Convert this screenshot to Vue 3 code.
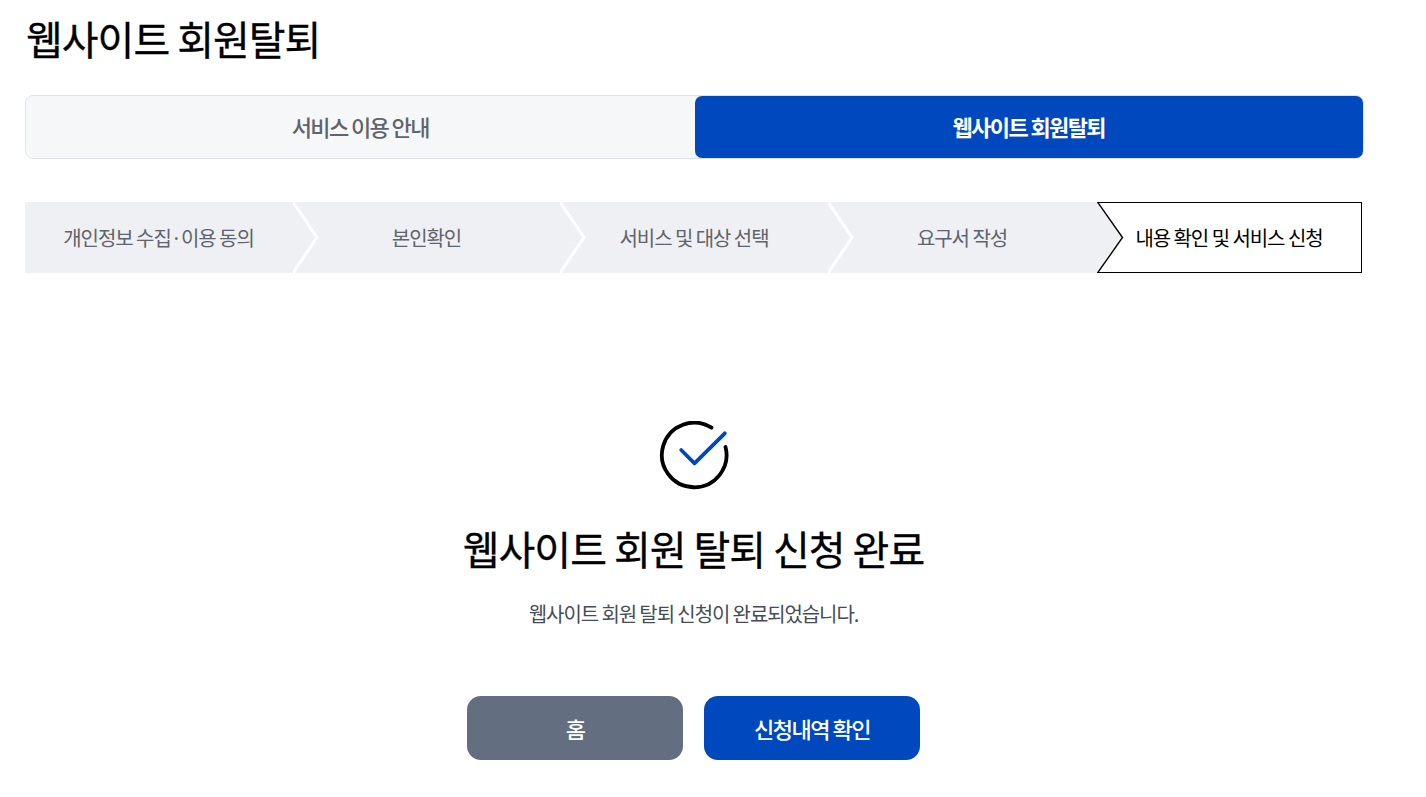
<template>
  <div class="page">
    <h1 class="page-title">웹사이트 회원탈퇴</h1>

    <div class="tabs">
      <div class="tab">서비스 이용 안내</div>
      <div class="tab active">웹사이트 회원탈퇴</div>
    </div>

    <ol class="steps">
      <li v-for="(step, i) in steps" :key="step" class="step" :class="{ current: i === steps.length - 1 }">
        <span>{{ step }}</span>
        <svg v-if="i < steps.length - 2" class="chevron" width="26" height="71" viewBox="0 0 26 71">
          <path d="M0 0 L24 35.5 L0 71" fill="#eef0f4" stroke="#fff" stroke-width="3" />
        </svg>
        <svg v-if="i === steps.length - 1" class="chevron-cur" width="28" height="71" viewBox="0 0 28 71">
          <path d="M0 0 L25 35.5 L0 71 Z" fill="#eef0f4" />
          <path d="M0.5 0 L25.5 35.5 L0.5 71" fill="none" stroke="#000" stroke-width="1.4" />
        </svg>
      </li>
    </ol>

    <section class="result">
      <svg class="check" width="70" height="70" viewBox="0 0 70 70" fill="none">
        <path d="M52.5 6.7 A32.3 32.3 0 1 0 66.5 26" stroke="#000" stroke-width="3.8" stroke-linecap="round" />
        <path d="M22.2 29 L35.5 42.3 L65.8 12.3" stroke="#0048bd" stroke-width="3.8" stroke-linecap="round" stroke-linejoin="round" />
      </svg>
      <h2 class="result-title">웹사이트 회원 탈퇴 신청 완료</h2>
      <p class="result-desc">웹사이트 회원 탈퇴 신청이 완료되었습니다.</p>
      <div class="actions">
        <button class="btn gray">홈</button>
        <button class="btn blue">신청내역 확인</button>
      </div>
    </section>
  </div>
</template>

<script setup>
const steps = [
  "개인정보 수집·이용 동의",
  "본인확인",
  "서비스 및 대상 선택",
  "요구서 작성",
  "내용 확인 및 서비스 신청"
];
</script>

<style>
html,
body {
  background: #fff;
}
</style>

<style scoped>
.page {
  width: 1337px;
  margin-left: 25px;
  font-family: "Noto Sans CJK KR", "Noto Sans", sans-serif;
  color: #000;
}

.page-title {
  margin: 0;
  padding: 10px 0 0 1px;
  height: 95px;
  box-sizing: border-box;
  font-size: 40px;
  line-height: 56px;
  font-weight: 400;
  letter-spacing: -1px;
  -webkit-text-stroke: 0.3px #000;
}

/* tabs */
.tabs {
  display: flex;
  width: 1339px;
  height: 64px;
  box-sizing: border-box;
  background: #f6f7f9;
  border: 1px solid #dfe2e8;
  border-radius: 8px;
}

.tab {
  flex: 1;
  display: flex;
  align-items: center;
  justify-content: center;
  padding-bottom: 2px;
  font-size: 22px;
  font-weight: 500;
  letter-spacing: -1.6px;
  color: #5f636b;
}

.tab.active {
  background: #0048bd;
  color: #fff;
  font-weight: 700;
  border-radius: 7px;
}

/* steps */
.steps {
  display: grid;
  grid-template-columns: 269px 267px 268px 268px 265px;
  margin: 43px 0 0;
  padding: 0;
  list-style: none;
}

.step {
  position: relative;
  display: flex;
  align-items: center;
  justify-content: center;
  height: 71px;
  padding-right: 2px;
  background: #eef0f4;
  font-size: 20px;
  letter-spacing: -1.05px;
  color: #5f636b;
}

.step.current {
  background: #fff;
  border: 1px solid #000;
  border-left: 0;
  padding-right: 0;
  box-sizing: border-box;
  color: #000;
}

.chevron {
  position: absolute;
  top: 0;
  right: -25px;
  z-index: 1;
}

.chevron-cur {
  position: absolute;
  top: -1px;
  left: 0;
}

/* result */
.result {
  display: flex;
  flex-direction: column;
  align-items: center;
  padding-top: 148px;
}

.check {
  display: block;
}

.result-title {
  margin: 28px 0 0;
  font-size: 40px;
  line-height: 58px;
  font-weight: 400;
  letter-spacing: -1px;
  -webkit-text-stroke: 0.3px #000;
}

.result-desc {
  margin: 23px 0 0;
  font-size: 20px;
  line-height: 28px;
  letter-spacing: -1.1px;
  color: #464c57;
}

.actions {
  display: flex;
  gap: 21px;
  margin-top: 68px;
}

.btn {
  width: 216px;
  height: 64px;
  padding-bottom: 2px;
  border: 0;
  border-radius: 14px;
  color: #fff;
  font-family: inherit;
  font-size: 22px;
  font-weight: 500;
  letter-spacing: -1.5px;
}

.btn.gray {
  background: #636e80;
}

.btn.blue {
  background: #0048bd;
}
</style>
